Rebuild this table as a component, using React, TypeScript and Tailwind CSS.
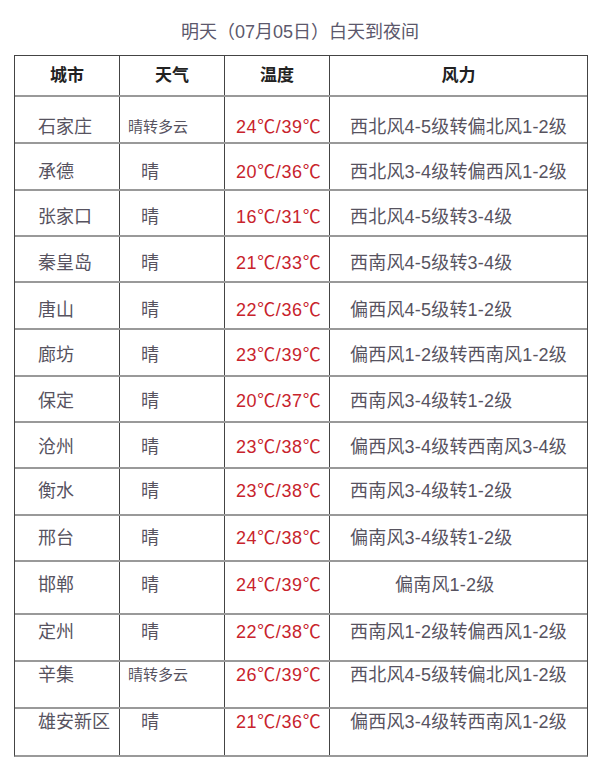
import React from "react";

type Row = {
  city: string;
  weather: string;
  temp: string;
  wind: string;
  h: string;
  pt: string;
  weatherPl: string;
  windPl: string;
};

const rows: Row[] = [
  { city: "石家庄", weather: "晴转多云", temp: "24℃/39℃", wind: "西北风4-5级转偏北风1-2级", h: "h-[47px]", pt: "pt-[18px]", weatherPl: "pl-[8px]", windPl: "pl-[20px]" },
  { city: "承德", weather: "晴", temp: "20℃/36℃", wind: "西北风3-4级转偏西风1-2级", h: "h-[47px]", pt: "pt-[16px]", weatherPl: "pl-[21px]", windPl: "pl-[20px]" },
  { city: "张家口", weather: "晴", temp: "16℃/31℃", wind: "西北风4-5级转3-4级", h: "h-[46px]", pt: "pt-[14px]", weatherPl: "pl-[21px]", windPl: "pl-[20px]" },
  { city: "秦皇岛", weather: "晴", temp: "21℃/33℃", wind: "西南风4-5级转3-4级", h: "h-[46px]", pt: "pt-[14px]", weatherPl: "pl-[21px]", windPl: "pl-[20px]" },
  { city: "唐山", weather: "晴", temp: "22℃/36℃", wind: "偏西风4-5级转1-2级", h: "h-[47px]", pt: "pt-[15px]", weatherPl: "pl-[21px]", windPl: "pl-[20px]" },
  { city: "廊坊", weather: "晴", temp: "23℃/39℃", wind: "偏西风1-2级转西南风1-2级", h: "h-[47px]", pt: "pt-[13px]", weatherPl: "pl-[21px]", windPl: "pl-[20px]" },
  { city: "保定", weather: "晴", temp: "20℃/37℃", wind: "西南风3-4级转1-2级", h: "h-[46px]", pt: "pt-[12px]", weatherPl: "pl-[21px]", windPl: "pl-[20px]" },
  { city: "沧州", weather: "晴", temp: "23℃/38℃", wind: "偏西风3-4级转西南风3-4级", h: "h-[46px]", pt: "pt-[12px]", weatherPl: "pl-[21px]", windPl: "pl-[20px]" },
  { city: "衡水", weather: "晴", temp: "23℃/38℃", wind: "西南风3-4级转1-2级", h: "h-[47px]", pt: "pt-[10px]", weatherPl: "pl-[21px]", windPl: "pl-[20px]" },
  { city: "邢台", weather: "晴", temp: "24℃/38℃", wind: "偏南风3-4级转1-2级", h: "h-[46px]", pt: "pt-[10px]", weatherPl: "pl-[21px]", windPl: "pl-[20px]" },
  { city: "邯郸", weather: "晴", temp: "24℃/39℃", wind: "偏南风1-2级", h: "h-[53px]", pt: "pt-[11px]", weatherPl: "pl-[21px]", windPl: "pl-[65px]" },
  { city: "定州", weather: "晴", temp: "22℃/38℃", wind: "西南风1-2级转偏西风1-2级", h: "h-[47px]", pt: "pt-[5px]", weatherPl: "pl-[21px]", windPl: "pl-[20px]" },
  { city: "辛集", weather: "晴转多云", temp: "26℃/39℃", wind: "西北风4-5级转偏北风1-2级", h: "h-[47px]", pt: "pt-[1px]", weatherPl: "pl-[8px]", windPl: "pl-[20px]" },
  { city: "雄安新区", weather: "晴", temp: "21℃/36℃", wind: "偏西风3-4级转西南风1-2级", h: "h-[46px]", pt: "pt-[1px]", weatherPl: "pl-[21px]", windPl: "pl-[20px]" },
];

export default function App() {
  return (
    <div className="w-[600px] h-[775px] bg-white font-['Liberation_Sans','Noto_Sans_CJK_SC',sans-serif] text-[#57535f]">
      {/* 标题 */}
      <div className="h-[55px] pt-[20px] text-center text-[18px] leading-[24px] text-[#5c586c]">
        明天（07月05日）白天到夜间
      </div>

      {/* 表格 */}
      <div className="ml-[14px] w-[574px] border border-[#444] border-b-2 border-b-[#999]">
        <div className="flex h-[41px] items-center border-b-2 border-[#999] text-[17px] font-bold text-[#222]">
          <div className="w-[105px] h-full flex items-center justify-center border-r border-[#444]">城市</div>
          <div className="w-[105px] h-full flex items-center justify-center border-r border-[#444]">天气</div>
          <div className="w-[105px] h-full flex items-center justify-center border-r border-[#444]">温度</div>
          <div className="flex-1 h-full flex items-center justify-center">风力</div>
        </div>

        {rows.map((r, i) => (
          <div
            key={r.city}
            className={`flex ${r.h} ${i < rows.length - 1 ? "border-b-2 border-[#999]" : ""} text-[18px] leading-[24px]`}
          >
            <div className={`w-[105px] shrink-0 border-r border-[#444] pl-[23px] ${r.pt}`}>{r.city}</div>
            <div className={`w-[105px] shrink-0 border-r border-[#444] ${r.weatherPl} ${r.pt} ${r.weather.length > 1 ? "text-[15px]" : ""}`}>
              {r.weather}
            </div>
            <div className={`w-[105px] shrink-0 border-r border-[#444] pl-[11px] text-[#c8232c] whitespace-nowrap tracking-[0.6px] ${r.pt}`}>
              {r.temp}
            </div>
            <div className={`flex-1 whitespace-nowrap tracking-[0.2px] ${r.windPl} ${r.pt}`}>{r.wind}</div>
          </div>
        ))}
      </div>
    </div>
  );
}
